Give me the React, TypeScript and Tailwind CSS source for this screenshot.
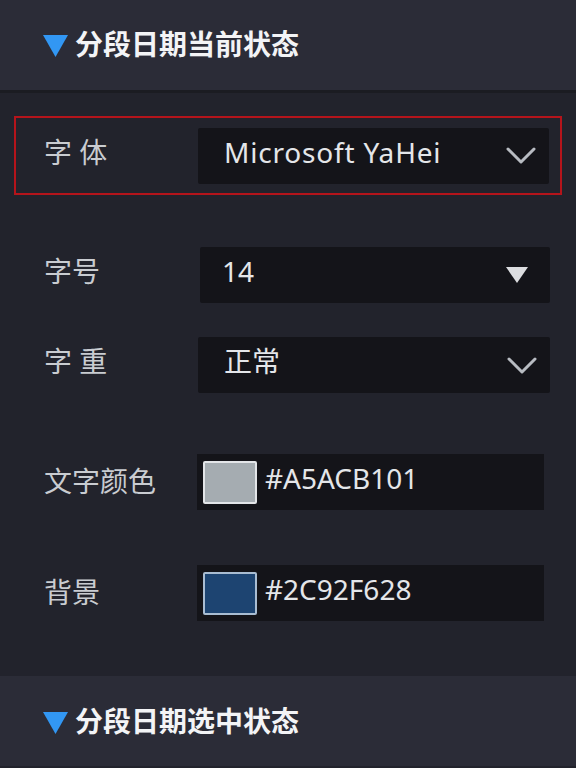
import React from "react";

const FONT = { fontFamily: '"Noto Sans", "Noto Sans CJK SC", sans-serif' };

function Chevron() {
  return (
    <svg width="30" height="19" viewBox="0 0 30 19" className="shrink-0">
      <polyline points="2,3 15,16 28,3" fill="none" stroke="#b8bcc2" strokeWidth="3" strokeLinecap="round" strokeLinejoin="round" />
    </svg>
  );
}

function Tri() {
  return (
    <svg width="24" height="18" viewBox="0 0 24 18" className="shrink-0">
      <polygon points="1,1 23,1 12,17" fill="#dcdde0" />
    </svg>
  );
}

function SectionHeader({ title, border }: { title: string; border?: boolean }) {
  return (
    <div className={`bg-[#2b2c37] flex items-center pl-[43px] ${border ? "h-[93px] pb-[3px] border-b-[3px] border-[#1b1c22]" : "h-[90px]"}`}>
      <svg width="25" height="22" viewBox="0 0 25 22" className="shrink-0 mt-[4px]">
        <polygon points="0,0 25,0 12.5,22" fill="#3297f3" />
      </svg>
      <span className="ml-[7px] text-[28px] font-bold text-[#f3f4f6] leading-none">{title}</span>
    </div>
  );
}

const LABEL = "text-[28px] leading-[36px] pb-[8px] text-[#c9ccd1]";
const LABEL2 = "text-[28px] leading-[36px] pb-[2px] text-[#c9ccd1]";
const VALUE = "text-[28px] leading-[36px] pb-[8px] text-[#e4e6e9]";

export default function App() {
  return (
    <div className="w-[576px] h-[768px] bg-[#22232c] flex flex-col overflow-hidden" style={FONT}>
      <SectionHeader title="分段日期当前状态" border />

      <div className="mx-[14px] mt-[23px] border-2 border-[#b5141b] h-[79px] flex items-center pl-[28px] pr-[11px]">
        <div className={`w-[154px] ${LABEL}`}>字 体</div>
        <div className="flex-1 h-[56px] bg-[#141419] rounded-[2px] flex items-center justify-between pl-[26px] pr-[13px]">
          <span className={`${VALUE} tracking-[0.8px]`}>Microsoft YaHei</span>
          <Chevron />
        </div>
      </div>

      <div className="mt-[52px] flex items-center pl-[44px] pr-[26px]">
        <div className={`w-[156px] ${LABEL}`}>字号</div>
        <div className="flex-1 h-[56px] bg-[#141419] rounded-[2px] flex items-center justify-between pl-[22px] pr-[21px]">
          <span className={VALUE}>14</span>
          <Tri />
        </div>
      </div>

      <div className="mt-[34px] flex items-center pl-[44px] pr-[26px]">
        <div className={`w-[154px] ${LABEL}`}>字 重</div>
        <div className="flex-1 h-[56px] bg-[#141419] rounded-[2px] flex items-center justify-between pl-[26px] pr-[13px]">
          <span className={VALUE}>正常</span>
          <Chevron />
        </div>
      </div>

      <div className="mt-[61px] flex items-center pl-[44px] pr-[32px]">
        <div className={`w-[153px] ${LABEL2}`}>文字颜色</div>
        <div className="flex-1 h-[56px] bg-[#141419] flex items-center pl-[6px]">
          <div className="w-[54px] h-[43px] border-2 border-[#e3e5e8] bg-[#a5acb1] rounded-[2px]" />
          <span className={`ml-[8px] ${VALUE}`}>#A5ACB101</span>
        </div>
      </div>

      <div className="mt-[55px] flex items-center pl-[44px] pr-[32px]">
        <div className={`w-[153px] ${LABEL2}`}>背景</div>
        <div className="flex-1 h-[56px] bg-[#141419] flex items-center pl-[6px]">
          <div className="w-[54px] h-[43px] border-2 border-[#a9bdd2] bg-[#1d4471] rounded-[2px]" />
          <span className={`ml-[8px] ${VALUE}`}>#2C92F628</span>
        </div>
      </div>

      <div className="mt-[55px]">
        <SectionHeader title="分段日期选中状态" />
      </div>
    </div>
  );
}
